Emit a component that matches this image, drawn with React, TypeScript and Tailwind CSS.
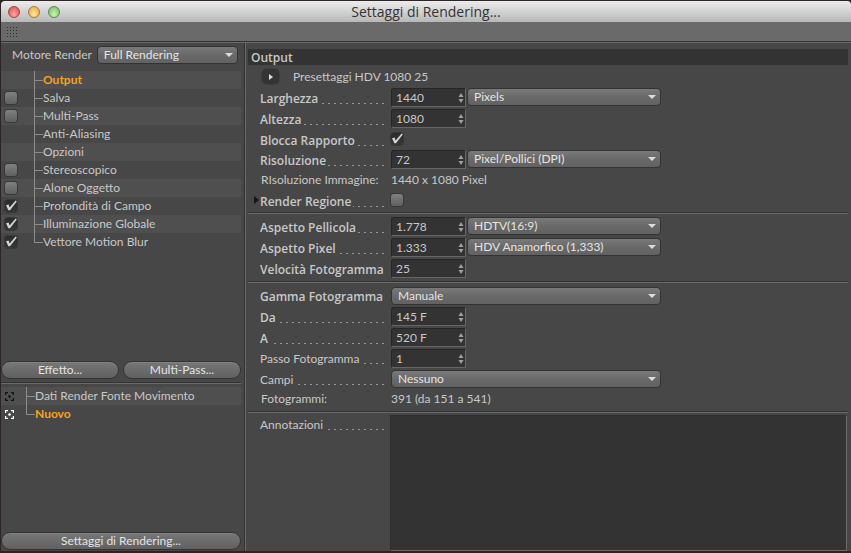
import React, { useState } from "react";

const treeItems = [
  { name: "Output" },
  { name: "Salva", checked: false },
  { name: "Multi-Pass", checked: false },
  { name: "Anti-Aliasing" },
  { name: "Opzioni" },
  { name: "Stereoscopico", checked: false },
  { name: "Alone Oggetto", checked: false },
  { name: "Profondità di Campo", checked: true },
  { name: "Illuminazione Globale", checked: true },
  { name: "Vettore Motion Blur", checked: true },
];

const presets = ["Dati Render Fonte Movimento", "Nuovo"];

function CheckBox({ id, defaultChecked }: { id: string; defaultChecked?: boolean }) {
  return (
    <span className="relative block w-3 h-3 shrink-0">
      <input
        id={id}
        type="checkbox"
        defaultChecked={defaultChecked}
        className="peer block appearance-none w-3 h-3 rounded-[3px] bg-linear-to-b from-[#808080] to-[#606060] shadow-[0_0_0_1px_#383838] checked:from-[#2c2c2c] checked:to-[#363636]"
      />
      <svg viewBox="0 0 14 14" className="hidden peer-checked:block absolute -top-px -left-px w-3.5 h-3.5 pointer-events-none">
        <path d="M2 6.2L4.6 5.6L5.6 8.4L11.6 1.6L12.8 2.4L6 11.2H4.4Z" fill="#d4d4d4" />
      </svg>
    </span>
  );
}

function Select({ id, value, className }: { id: string; value: string; className: string }) {
  return (
    <span className={`relative block ${className}`}>
      <select
        id={id}
        aria-label={value}
        className="block appearance-none w-full h-[18px] pl-[6px] pr-5 pb-[2px] leading-4 rounded-[4px] border border-[#333333] bg-linear-to-b from-[#7a7a7a] via-[#696969] to-[#626262] text-[#e4e4e4]"
      >
        <option>{value}</option>
      </select>
      <svg viewBox="0 0 8 4" className="absolute right-[5px] top-[7px] w-2 h-1 pointer-events-none">
        <path d="M0 0H8L4 4Z" fill="#dcdcdc" />
      </svg>
    </span>
  );
}

function NumberField({ id, value }: { id: string; value: string }) {
  return (
    <span className="relative block w-[75px] shrink-0">
      <input
        id={id}
        type="text"
        defaultValue={value}
        className="block w-full h-[19px] pl-1 pr-3 leading-4 bg-[#333333] border border-t-[#262626] border-l-[#262626] border-r-[#666666] border-b-[#666666] rounded-tl-[3px] text-[#c8c8c8]"
      />
      <svg viewBox="0 0 6 10" className="absolute right-[2px] top-[5px] w-1.5 h-2.5 pointer-events-none">
        <path d="M0.5 4H5.5L3 0Z" fill="#a0a0a0" />
        <path d="M0.5 6H5.5L3 10Z" fill="#a0a0a0" />
      </svg>
    </span>
  );
}

type RowProps = {
  id: string;
  label: string;
  bold?: boolean;
  arrow?: boolean;
  short?: boolean;
  children: React.ReactNode;
};

function Row({ id, label, bold, arrow, short, children }: RowProps) {
  return (
    <div className={`flex items-center ${short ? "h-5" : "h-[21px]"}`}>
      <span className="w-3 shrink-0 pl-[6px]">
        {arrow && (
          <svg viewBox="0 0 5 8" className="w-[5px] h-2">
            <path d="M0 0L5 4L0 8Z" fill="#161616" />
          </svg>
        )}
      </span>
      <label
        htmlFor={id}
        className={`flex items-end w-[124px] mr-[7px] shrink-0 leading-4 whitespace-nowrap ${bold ? "pt-[3px] font-['Open_Sans',sans-serif] font-semibold" : "pt-px"}`}
      >
        {label}
        <span className="flex-1 h-px ml-[2px] mb-[3px] bg-[repeating-linear-gradient(to_left,#999999_0_2px,transparent_2px_6px)]" />
      </label>
      <div className="flex flex-1 items-start gap-px">{children}</div>
    </div>
  );
}

function InfoRow({ label, value }: { label: string; value: string }) {
  return (
    <div className="flex h-5 items-center pl-[13px]">
      <span className="w-[130px] shrink-0">{label}</span>
      <span>{value}</span>
    </div>
  );
}

function Separator({ className }: { className: string }) {
  return <hr className={`h-[2px] shrink-0 border-0 border-t border-t-[#333333] bg-[#6a6a6a] ${className}`} />;
}

function TreeLines({ last }: { last: boolean }) {
  return (
    <span className="flex flex-col w-[9px] h-[18px] shrink-0">
      <span className="h-[10px] border-l border-b border-[#8c8c8c]" />
      <span className={`flex-1 ${last ? "" : "border-l border-[#8c8c8c]"}`} />
    </span>
  );
}

const pill =
  "h-[18px] leading-4 rounded-full border border-[#333333] bg-linear-to-b from-[#777777] to-[#606060] text-[#e4e4e4] shadow-[inset_0_1px_0_#828282]";

const highlighted = "text-[#f9a11b] font-bold";

function Sidebar() {
  const [active, setActive] = useState("Output");
  const [preset, setPreset] = useState("Nuovo");

  return (
    <aside className="flex flex-col w-[243px] shrink-0 pr-[3px] pt-[2px] pb-px">
      <div className="flex items-center pl-[11px] pr-[3px] gap-[5px]">
        <label htmlFor="engine" className="pt-px whitespace-nowrap">Motore Render</label>
        <Select id="engine" value="Full Rendering" className="flex-1" />
      </div>

      <ul className="mt-[7px]">
        {treeItems.map((item, idx) => (
          <li key={item.name} className="flex h-[18px] items-center pl-1 odd:bg-[#4f4f4f]">
            <span className="w-[29px] pb-px shrink-0">
              {item.checked !== undefined && <CheckBox id={`tree-${idx}`} defaultChecked={item.checked} />}
            </span>
            <TreeLines last={idx === treeItems.length - 1} />
            {item.checked !== undefined ? (
              <label htmlFor={`tree-${idx}`}>{item.name}</label>
            ) : (
              <button onClick={() => setActive(item.name)} className={active === item.name ? highlighted : ""}>
                {item.name}
              </button>
            )}
          </li>
        ))}
      </ul>

      <div className="flex gap-1 mt-[110px]">
        <button className={`flex-1 ${pill}`}>Effetto...</button>
        <button className={`flex-1 ${pill}`}>Multi-Pass...</button>
      </div>
      <Separator className="my-[3px]" />

      <ul>
        {presets.map((name, idx) => (
          <li key={name} className="flex h-[18px] items-center pl-1 odd:bg-[#4f4f4f]">
            <svg
              viewBox="0 0 9 9"
              fill="none"
              stroke="currentColor"
              strokeWidth="1.2"
              className={`w-[9px] h-[9px] mr-3 shrink-0 ${preset === name ? "text-white" : "text-[#111111]"}`}
            >
              <path d="M0.6 3V0.6H3M6 0.6H8.4V3M8.4 6V8.4H6M3 8.4H0.6V6" />
              <circle cx="4.5" cy="4.5" r="1.3" fill="currentColor" stroke="none" />
            </svg>
            <TreeLines last={idx === presets.length - 1} />
            <button onClick={() => setPreset(name)} className={preset === name ? highlighted : ""}>
              {name}
            </button>
          </li>
        ))}
      </ul>

      <button className={`mt-auto w-full ${pill}`}>Settaggi di Rendering...</button>
    </aside>
  );
}

function OutputPanel() {
  return (
    <main className="flex flex-col flex-1 min-w-0 pl-[2px] pr-[3px] pt-[6px] border-l border-l-[#6a6a6a]">
      <h2 className="h-4 pl-[3px] leading-[18px] bg-[#333333] font-['Open_Sans',sans-serif] text-[12px] font-semibold">
        Output
      </h2>

      <div className="flex h-[21px] items-center pl-[14px] mt-px">
        <button
          aria-label="Presettaggi"
          className="flex w-[17px] h-[15px] items-center justify-center rounded-[5px] bg-[#343434] shadow-[0_0_0_1px_#3d3d3d]"
        >
          <svg viewBox="0 0 4 6" className="w-1 h-1.5">
            <path d="M0 0L4 3L0 6Z" fill="#dddddd" />
          </svg>
        </button>
        <span className="ml-[14px] pt-px">Presettaggi HDV 1080 25</span>
      </div>
      <Row id="width" label="Larghezza" bold>
        <NumberField id="width" value="1440" />
        <Select id="width-unit" value="Pixels" className="w-[194px]" />
      </Row>
      <Row id="height" label="Altezza" bold>
        <NumberField id="height" value="1080" />
      </Row>
      <Row id="lock" label="Blocca Rapporto" bold short>
        <CheckBox id="lock" defaultChecked />
      </Row>
      <Row id="resolution" label="Risoluzione" bold>
        <NumberField id="resolution" value="72" />
        <Select id="resolution-unit" value="Pixel/Pollici (DPI)" className="w-[194px]" />
      </Row>
      <InfoRow label="RIsoluzione Immagine:" value="1440 x 1080 Pixel" />
      <Row id="region" label="Render Regione" bold arrow short>
        <CheckBox id="region" />
      </Row>
      <Separator className="my-[2px]" />

      <Row id="film-aspect" label="Aspetto Pellicola" bold>
        <NumberField id="film-aspect" value="1.778" />
        <Select id="film-preset" value="HDTV(16:9)" className="w-[194px]" />
      </Row>
      <Row id="pixel-aspect" label="Aspetto Pixel" bold>
        <NumberField id="pixel-aspect" value="1.333" />
        <Select id="pixel-preset" value="HDV Anamorfico (1,333)" className="w-[194px]" />
      </Row>
      <Row id="fps" label="Velocità Fotogramma" bold>
        <NumberField id="fps" value="25" />
      </Row>
      <Separator className="my-[2px]" />

      <Row id="range" label="Gamma Fotogramma" bold>
        <Select id="range" value="Manuale" className="w-[270px]" />
      </Row>
      <Row id="from" label="Da" bold>
        <NumberField id="from" value="145 F" />
      </Row>
      <Row id="to" label="A" bold>
        <NumberField id="to" value="520 F" />
      </Row>
      <Row id="step" label="Passo Fotogramma">
        <NumberField id="step" value="1" />
      </Row>
      <Row id="fields" label="Campi" short>
        <Select id="fields" value="Nessuno" className="w-[270px]" />
      </Row>
      <InfoRow label="Fotogrammi:" value="391 (da 151 a 541)" />
      <Separator className="my-[2px]" />

      <div className="flex flex-1">
        <label htmlFor="notes" className="flex items-end h-[18px] w-[124px] ml-3 mr-[6px] leading-4 shrink-0">
          Annotazioni
          <span className="flex-1 h-px ml-[2px] mb-[3px] bg-[repeating-linear-gradient(to_left,#999999_0_2px,transparent_2px_6px)]" />
        </label>
        <textarea
          id="notes"
          className="flex-1 mr-px p-1 resize-none bg-[#333333] border border-t-[#2e2e2e] border-l-[#2e2e2e] border-r-[#6a6a6a] border-b-[#6a6a6a]"
        />
      </div>
    </main>
  );
}

export default function App() {
  return (
    <div className="flex flex-col min-h-screen pt-px pb-[2px] pl-px bg-[#2b2526] font-[Lato,sans-serif] text-[12px] leading-[18px] text-[#c8c8c8]">
      <header className="relative flex h-[21px] items-center justify-center rounded-t-[4px] bg-linear-to-b from-[#ececec] to-[#b8b8b8]">
        <div className="absolute left-[7px] flex gap-2">
          <button aria-label="Chiudi" className="w-3 h-3 rounded-full border border-[#a04844] bg-radial-[at_50%_75%] from-[#ffaaa4] to-[#dc433f]" />
          <button aria-label="Riduci" className="w-3 h-3 rounded-full border border-[#a9783a] bg-radial-[at_50%_75%] from-[#ffe79a] to-[#e6a03c]" />
          <button aria-label="Ingrandisci" className="w-3 h-3 rounded-full border border-[#5b8a4c] bg-radial-[at_50%_75%] from-[#cdf5b4] to-[#6db95a]" />
        </div>
        <h1 className="font-['Open_Sans',sans-serif] text-[14px] text-[#333333]">Settaggi di Rendering...</h1>
      </header>

      <div className="flex h-[19px] items-center pl-[5px] bg-[#6a6a6a]">
        <div className="w-3 h-3 bg-[radial-gradient(#303030_1px,transparent_1px)] bg-size-[3px_3px]" />
      </div>

      <div className="flex flex-1 border-t border-t-[#333333] bg-[#474747]">
        <div className="flex flex-1 min-w-0 border-t border-t-[#6a6a6a]">
          <Sidebar />
          <div className="w-px bg-[#333333]" />
          <OutputPanel />
        </div>
      </div>
    </div>
  );
}
